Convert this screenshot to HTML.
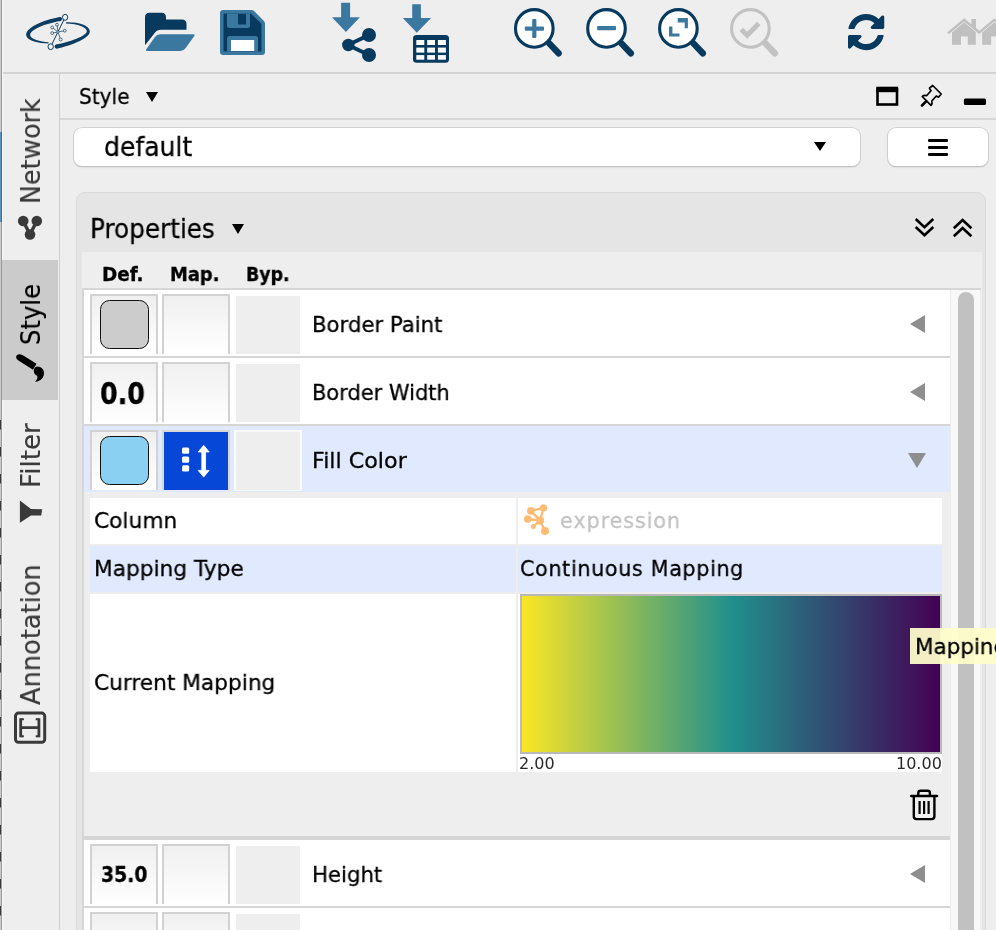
<!DOCTYPE html>
<html lang="en">
<head>
<meta charset="utf-8">
<title>Style</title>
<style>
*{box-sizing:border-box;margin:0;padding:0}
html,body{width:996px;height:930px;overflow:hidden;background:#eeeeee}
body{font-family:"DejaVu Sans","Liberation Sans",sans-serif;color:#000;position:relative}
#app{position:absolute;left:0;top:0;width:996px;height:930px;overflow:hidden;background:#eeeeee}
.a{position:absolute}
.t{position:absolute;white-space:nowrap;line-height:1;transform-origin:0 0;-webkit-text-stroke:.3px currentColor;will-change:transform}
.b{font-family:"DejaVu Sans Condensed","DejaVu Sans","Liberation Sans",sans-serif;font-weight:bold}
.row{position:absolute;left:84px;width:866px;height:66px;background:#fff}
.sep{position:absolute;left:84px;width:866px;height:2px;background:#d6d6d6}
.cell{position:absolute;top:4px;height:60px;width:68px;border:2px solid #d2d2d2;border-bottom:none;background:linear-gradient(#f0f0f0,#ffffff)}
.byp{position:absolute;top:6px;left:152px;width:64px;height:58px;background:#eeeeee}
.sw{position:absolute;left:8px;top:3.800px;width:49.300px;height:49.300px;border:1.400px solid #111;border-radius:9.500px}
.tri{position:absolute;width:0;height:0}
.vt{position:absolute;white-space:nowrap;line-height:1;transform-origin:0 0;will-change:transform;-webkit-text-stroke:.2px currentColor;transform:rotate(-90deg) scaleX(.94);font-size:26px;color:#3a3a3a}
svg{position:absolute;overflow:visible}
</style>
</head>
<body>
<div id="app">

<!-- left strip -->
<div class="a" style="left:0;top:0;width:1px;height:930px;background:#c8c9c9"></div>
<div class="a" style="left:1px;top:0;width:1px;height:930px;background:#9b9b9b"></div>
<div class="a" style="left:0;top:132px;width:1px;height:90px;background:#5a8fc0"></div>
<div class="a" style="left:1px;top:132px;width:1px;height:90px;background:#41709f"></div>
<div class="a" style="left:0;top:420px;width:1.400px;height:510px;background:repeating-linear-gradient(180deg,#3a3a3a 0,#3a3a3a 9px,rgba(0,0,0,0) 10px,rgba(0,0,0,0) 27px)"></div>
<div class="a" style="left:2px;top:0;width:1px;height:930px;background:#f7f7f7"></div>

<!-- toolbar -->
<div id="toolbar" class="a" style="left:3px;top:0;width:993px;height:72px;background:#eeeeee"></div>
<div class="a" style="left:3px;top:72px;width:993px;height:2px;background:#d3d3d3"></div>


<!-- toolbar icons -->
<svg id="tbicons" class="a" style="left:0;top:0" width="996" height="72" viewBox="0 0 996 72">
 <!-- cytoscape logo -->
 <g fill="#0b3c62" stroke="none">
  <path d="M60,17 C42,20 23.5,29 26.5,36.2 C28.3,41 38,43.2 48.5,43.4 L48.5,42.3 C40,41.6 30.8,39.2 30.2,35.2 C29.5,30.2 44,23.8 60.500,21.100 Z"/>
  <circle cx="60" cy="19.100" r="2.100"/>
  <path d="M66,22.2 C78,21.8 89,25 89.8,31 C90.6,38 72,45.3 57,48.6 L56.2,44.6 C70,41.6 86.4,36.2 86.8,31.2 C87,27.2 78,23.8 66,23.4 Z"/>
  <circle cx="56.7" cy="46.6" r="2.1"/>
 </g>
 <g stroke="#0b3c62" stroke-width="1" fill="#f2f2f2">
  <line x1="65" y1="17.5" x2="50.7" y2="46.7"/>
  <g stroke-width=".7">
  <line x1="58" y1="32" x2="52.2" y2="27.5"/><line x1="58" y1="32" x2="57" y2="24.7"/><line x1="58" y1="32" x2="64.8" y2="30.7"/><line x1="58" y1="32" x2="52.2" y2="33.1"/><line x1="58" y1="32" x2="60.6" y2="39.5"/>
  <circle cx="52.2" cy="27.5" r="1.4"/><circle cx="57" cy="24.7" r="1.4"/><circle cx="64.8" cy="30.7" r="1.4"/><circle cx="52.2" cy="33.1" r="1.4"/><circle cx="60.6" cy="39.5" r="1.5"/><circle cx="58" cy="32" r="1.2"/>
  </g>
  <ellipse cx="65.100" cy="17.300" rx="2.600" ry="3"/><ellipse cx="50.700" cy="46.700" rx="2.700" ry="2.900"/>
 </g>
 <!-- folder open -->
 <path fill="#083a5f" d="M145,17.300 q0,-4.500 4.500,-4.500 h12 q4.500,0 4.500,4.500 v2.300 h16 q4.500,0 4.500,4.500 v5.700 h-25.500 q-4,0 -6.300,3.300 L145,45.300 Z"/>
 <path fill="#3b78a0" d="M160.2,34.3 h33.2 q2,0 0.9,1.7 l-8.6,12 q-2,2.9 -5.5,2.9 h-33 q-2,0 -0.9,-1.7 l8.6,-12.2 q1.9,-2.7 5.3,-2.7 Z"/>
 <!-- floppy -->
 <path fill="#3b78a0" d="M223,10 h28.5 q1.5,0 2.6,1.1 l9.800,9.800 q1.100,1.100 1.100,2.600 v28.500 q0,3 -3,3 h-39 q-3,0 -3,-3 v-39 q0,-3 3,-3 Z"/>
 <path fill="#083a5f" d="M223.500,13.500 h27.500 l10.500,10.500 v27.500 h-38 Z"/>
 <path fill="#3b78a0" d="M227,13.500 h23 v11.900 q0,2.500 -2.500,2.500 h-18 q-2.500,0 -2.500,-2.500 Z"/>
 <rect fill="#083a5f" x="238" y="13.900" width="8" height="10.600"/>
 <path fill="#3b78a0" d="M227,51.500 v-13 q0,-2.500 2.500,-2.500 h26 q2.500,0 2.500,2.500 v13 Z"/>
 <rect fill="#fff" x="231" y="40" width="23.200" height="11"/>
 <!-- import network -->
 <path fill="#3b78a0" d="M341.100,2.700 h9 v14.600 h9.800 l-14,14.600 l-13.900,-14.600 h9.100 Z"/>
 <g fill="#083a5f" stroke="#083a5f">
  <path fill="none" stroke-width="4" d="M369,35 L348,45 L369,55"/>
  <circle stroke="none" cx="348.300" cy="45" r="6.200"/><circle stroke="none" cx="369" cy="35" r="7"/><circle stroke="none" cx="369" cy="55" r="7"/>
 </g>
 <!-- import table -->
 <path fill="#3b78a0" d="M412.200,4.200 h8.700 v13.800 h10.200 l-14.300,14.800 l-14,-14.800 h9.400 Z"/>
 <rect fill="#083a5f" x="413" y="34.900" width="36" height="27.800" rx="3.500"/>
 <g fill="#fff">
  <rect x="416.300" y="40" width="8" height="5"/><rect x="427.200" y="40" width="7.800" height="5"/><rect x="437.900" y="40" width="8" height="5"/>
  <rect x="416.300" y="47.600" width="8" height="5"/><rect x="427.200" y="47.600" width="7.800" height="5"/><rect x="437.900" y="47.600" width="8" height="5"/>
  <rect x="416.300" y="55.100" width="8" height="4.600"/><rect x="427.200" y="55.100" width="7.800" height="4.600"/><rect x="437.900" y="55.100" width="8" height="4.600"/>
 </g>
 <!-- zoom in -->
 <g stroke="#083a5f" stroke-linecap="round">
  <line x1="549" y1="43.100" x2="558.600" y2="53.300" stroke-width="6.400"/>
  <circle cx="534.300" cy="28.400" r="18.800" fill="#fff" stroke-width="3.100"/>
  <line x1="621.200" y1="43.100" x2="630.800" y2="53.300" stroke-width="6.400"/>
  <circle cx="606.500" cy="28.400" r="18.800" fill="#fff" stroke-width="3.100"/>
  <line x1="693.200" y1="43.100" x2="702.800" y2="53.300" stroke-width="6.400"/>
  <circle cx="678.400" cy="28.400" r="18.800" fill="#fff" stroke-width="3.100"/>
 </g>
 <g fill="#3b78a0">
  <rect x="524.800" y="26.500" width="19.200" height="4.200" rx="1"/><rect x="532.200" y="19.100" width="4.200" height="18.900" rx="1"/>
  <rect x="597.100" y="26" width="18.900" height="4.200" rx="1"/>
  <path d="M677.700,18 h10.200 v10.200 h-3.200 v-5.800 h-7 Z"/>
  <path d="M669,26.400 h3.400 v7 h7.100 v3.200 h-10.500 Z"/>
 </g>
 <!-- zoom selected (disabled) -->
 <g stroke="#c2c2c2" stroke-linecap="round" fill="none">
  <line x1="765.200" y1="43.100" x2="774.800" y2="53.300" stroke-width="6.400"/>
  <circle cx="750.400" cy="28.400" r="18.800" stroke-width="3.100" fill="#eeeeee"/>
  <path d="M741.200,29.500 L747.200,35.300 L758.800,23.500" stroke-width="4.800" stroke-linecap="butt"/>
 </g>
 <!-- refresh -->
 <g transform="translate(848,13.900) scale(0.0236)">
  <path fill="#083a5f" transform="translate(-128,-128)" d="M1639 1056q0 5-1 7-64 268-268 434.500t-478 166.500q-146 0-282.500-55t-243.500-157l-129 129q-19 19-45 19t-45-19-19-45v-448q0-26 19-45t45-19h448q26 0 45 19t19 45-19 45l-137 137q71 66 161 102t187 36q134 0 250-65t186-179q11-17 53-117 8-23 30-23h192q13 0 22.500 9.500t9.500 22.500zm25-800v448q0 26-19 45t-45 19h-448q-26 0-45-19t-19-45 19-45l138-138q-148-137-349-137-134 0-250 65t-186 179q-11 17-53 117-8 23-30 23h-199q-13 0-22.500-9.500t-9.500-22.500v-7q65-268 270-434.500t480-166.500q146 0 284 55.500t245 156.500l130-129q19-19 45-19t45 19 19 45z"/>
 </g>
 <!-- homes (disabled) -->
 <g fill="#c0c0c0" stroke="none">
  <path d="M952,32.500 L964.200,22.300 L975.800,32 V44.700 H967.800 V36.500 H961 V44.700 H952 Z"/>
  <path d="M947.300,32.300 L964.200,18.300 L971.400,24.300 V19 H976 V28.100 L979.500,31 L978,32.900 L964.200,21.400 L948.800,34.200 Z"/>
  <path d="M982.200,32.500 L994.400,22.300 L1006,32 V44.700 H998 V36.500 H991.200 V44.700 H982.200 Z"/>
  <path d="M977.500,32.300 L994.400,18.300 L1001.600,24.300 V19 H1006 V28.100 L1009.700,31 L1008.200,32.900 L994.400,21.400 L979,34.200 Z"/>
 </g>
</svg>

<!-- sidebar -->
<div id="sidebar" class="a" style="left:3px;top:74px;width:56px;height:856px;background:#eeeeee"></div>
<div class="a" style="left:59px;top:74px;width:1px;height:856px;background:#d0d0d0"></div>
<div class="a" style="left:2px;top:260px;width:56px;height:139.700px;background:#cbcbcb"></div>

<!-- title bar -->
<div class="a" style="left:60px;top:118px;width:936px;height:2px;background:#d6d6d6"></div>


<!-- sidebar contents -->
<div class="vt" style="left:18px;top:203.500px;transform:rotate(-90deg) scaleX(.973)">Network</div>
<div class="vt" style="left:18px;top:344.500px;color:#000;transform:rotate(-90deg) scaleX(.935)">Style</div>
<div class="vt" style="left:18px;top:487.500px;transform:rotate(-90deg) scaleX(1.005)">Filter</div>
<div class="vt" style="left:18px;top:704.500px;transform:rotate(-90deg) scaleX(.987)">Annotation</div>
<svg class="a" style="left:0;top:74px" width="60" height="856" viewBox="0 74 60 856">
 <!-- share (network) icon -->
 <g fill="#3a3a3a" stroke="#3a3a3a">
  <path fill="none" stroke-width="3.400" d="M23.200,221 L30,234.500 L36.800,221"/>
  <circle stroke="none" cx="23.200" cy="221" r="5.300"/><circle stroke="none" cx="36.800" cy="221" r="5.300"/><circle stroke="none" cx="30" cy="234.500" r="5.300"/>
 </g>
 <!-- brush icon -->
 <g fill="#000">
  <path d="M16.200,356.500 C16.800,354 19.500,353.600 22,354.800 L36.500,363.800 L33,369.800 L18.800,360.800 C16.800,359.600 15.800,358.200 16.200,356.500 Z"/>
  <path d="M33.800,370.500 C34,366.500 37.500,365.800 40.500,367.200 C44,368.900 45,373.500 43,377.200 C41.500,380 38.500,381.600 35,381.800 C37.500,379.500 38,377.500 37,375.800 C35.500,374.800 33.700,373.500 33.800,370.500 Z"/>
 </g>
 <!-- filter icon -->
 <path fill="#3a3a3a" d="M19.900,500.600 L31,509 L42.200,509.300 L41.200,515.600 L31,515.600 L19.900,522.800 Z"/>
 <!-- annotation icon -->
 <g fill="none" stroke="#3a3a3a">
  <rect x="15.500" y="713.100" width="29.200" height="29.200" rx="3" stroke-width="3"/>
  <path stroke-width="2.800" d="M20.700,718.300 v18.900 M38.900,718.300 v18.900 M20.700,727.700 h18.200"/>
  <path stroke-width="2" d="M20.700,719.300 h3.200 M20.700,736.200 h3.200 M35.700,719.300 h3.200 M35.700,736.200 h3.200"/>
 </g>
</svg>

<!-- title bar contents -->
<div class="t" id="t_style" style="left:79.300px;top:85.500px;font-size:22px;transform:scaleX(.915)">Style</div>
<div class="tri" style="left:146.300px;top:92px;border-left:6px solid transparent;border-right:6px solid transparent;border-top:10px solid #000"></div>
<svg class="a" style="left:870px;top:80px" width="126" height="36" viewBox="870 80 126 36">
 <rect x="877.500" y="89.500" width="19.500" height="15" fill="none" stroke="#000" stroke-width="2.600"/>
 <rect x="876.300" y="86.700" width="21.800" height="5.500" fill="#000"/>
 <!-- pin -->
 <g fill="none" stroke="#000" stroke-width="1.700" stroke-linejoin="round">
  <path d="M929.500,88.200 L932.700,85.500 L941.200,94 L938.500,97.200 L936.300,96 L931.800,101 C932.500,103 932,104.300 931,105.300 L922.200,96.500 C923.200,95.500 924.500,95 926.500,95.700 L931,90.700 Z" fill="#eeeeee"/>
  <path d="M926.300,101.200 L922,105.500" stroke-width="2.600" stroke-linecap="round"/>
 </g>
 <rect x="963.900" y="98.400" width="22.100" height="6.600" rx="1.500" fill="#000"/>
</svg>

<!-- style selector -->
<div class="a" style="left:73.500px;top:127.600px;width:786.400px;height:38.400px;background:#fff;border-radius:8px;box-shadow:0 0 0 .8px #cacaca, 0 1px 1.500px rgba(0,0,0,.3)"></div>
<div class="t" id="t_default" style="left:104.200px;top:134px;font-size:26px;transform:scaleX(.965)">default</div>
<div class="tri" style="left:814px;top:142px;border-left:6px solid transparent;border-right:6px solid transparent;border-top:9.500px solid #000"></div>
<div class="a" style="left:887.500px;top:127.600px;width:100px;height:38.400px;background:#fff;border-radius:8px;box-shadow:0 0 0 .8px #cacaca, 0 1px 1.500px rgba(0,0,0,.3)"></div>
<div class="a" style="left:928px;top:138.500px;width:20px;height:3.400px;background:#000;border-radius:1px;box-shadow:0 7px 0 #000,0 14px 0 #000"></div>


<!-- properties panel -->
<div class="a" style="left:75.500px;top:191.800px;width:910px;height:760px;background:#e5e5e5;border:1px solid #dadada;border-radius:9px"></div>
<div class="t" id="t_props" style="left:90px;top:216.400px;font-size:26px;transform:scaleX(.95)">Properties</div>
<div class="tri" style="left:232px;top:224px;border-left:6px solid transparent;border-right:6px solid transparent;border-top:10px solid #000"></div>
<svg class="a" style="left:910px;top:214px" width="70" height="28" viewBox="910 214 70 28">
 <g fill="none" stroke="#000" stroke-width="2.600">
  <path d="M915.700,219 L924.500,227.300 L933.300,219 M915.700,227 L924.500,235.300 L933.300,227"/>
  <path d="M953.800,228.300 L962.600,220 L971.400,228.300 M953.800,236.300 L962.600,228 L971.400,236.300"/>
 </g>
</svg>
<div class="a" style="left:82px;top:252px;width:900px;height:700px;background:#eeeeee"></div>
<div class="t b" style="left:102px;top:264.300px;font-size:20px;transform:scaleX(1.02)">Def.</div>
<div class="t b" style="left:170.300px;top:264.300px;font-size:20px;transform:scaleX(.993)">Map.</div>
<div class="t b" style="left:246.200px;top:264.300px;font-size:20px;transform:scaleX(.965)">Byp.</div>
<!-- scroll pane -->
<div class="a" style="left:82px;top:288px;width:899px;height:2px;background:#d6d6d6"></div>
<div class="a" style="left:82px;top:288px;width:2px;height:650px;background:#d6d6d6"></div>
<div class="a" style="left:950px;top:290px;width:31px;height:650px;background:#f8f8f8;border-left:1px solid #ececec;border-right:1px solid #ececec"></div>
<div class="a" style="left:958px;top:292px;width:16px;height:660px;background:#c1c1c1;border-radius:8px"></div>
<div class="row" style="top:290px;background:#fff"><div class="cell" style="left:6px"><div class="sw" style="background:#cccccc"></div></div><div class="cell" style="left:78px"></div><div class="byp"></div><div class="t lbl" style="left:228px;top:23.500px;font-size:22px;transform:scaleX(.965)">Border Paint</div><div class="tri" style="left:826px;top:25px;border-top:9px solid transparent;border-bottom:9px solid transparent;border-right:15px solid #8e8e8e"></div></div>
<div class="sep" style="top:356px"></div>
<div class="row" style="top:358px;background:#fff"><div class="cell" style="left:6px"><div class="t b" style="left:8px;top:14.900px;font-size:30px;transform:scaleX(.94)">0.0</div></div><div class="cell" style="left:78px"></div><div class="byp"></div><div class="t lbl" style="left:228px;top:23.500px;font-size:22px;transform:scaleX(.952)">Border Width</div><div class="tri" style="left:826px;top:25px;border-top:9px solid transparent;border-bottom:9px solid transparent;border-right:15px solid #8e8e8e"></div></div>
<div class="sep" style="top:424px"></div>
<div class="row" style="top:426px;background:#e0e9fd"><div class="cell" style="left:6px"><div class="sw" style="background:#89d0f2"></div></div><div class="cell" style="left:78px;background:#0647d8;border-color:#d7d7d7"></div><div class="byp" style="top:4px;left:150px;width:68px;height:61px;border:2px solid #fafafa;border-bottom:1px solid #f2f6fe"></div><div class="t lbl" style="left:228px;top:23.500px;font-size:22px;transform:scaleX(1.01)">Fill Color</div><div class="tri" style="left:824px;top:27px;border-left:9.500px solid transparent;border-right:9.500px solid transparent;border-top:15px solid #8e8e8e"></div></div>

<!-- mapping icon -->
<svg class="a" style="left:164px;top:432px" width="64" height="58" viewBox="164 432 64 58">
 <g fill="#fff">
  <rect x="182" y="447.500" width="7.200" height="6.300" rx="1.500"/><rect x="182" y="456.400" width="7.200" height="6.400" rx="1.500"/><rect x="182" y="465.200" width="7.200" height="6.400" rx="1.500"/>
  <path d="M203.700,445.300 L209.200,452 H205.600 V470.400 H209.200 L203.700,477.100 L198.200,470.400 H201.800 V452 H198.200 Z" stroke="#fff" stroke-width=".8" stroke-linejoin="round"/>
 </g>
</svg>
<!-- mapping editor -->
<div class="a" style="left:90px;top:498px;width:852px;height:46px;background:#fff"></div>
<div class="a" style="left:90px;top:546px;width:852px;height:46px;background:#e0e9fd"></div>
<div class="a" style="left:90px;top:594px;width:852px;height:178px;background:#fff"></div>
<div class="a" style="left:516px;top:498px;width:2px;height:274px;background:#eeeeee"></div>
<div class="t" style="left:94.400px;top:509.600px;font-size:22px;transform:scaleX(.988)">Column</div>
<div class="t" style="left:93.900px;top:558px;font-size:22px;transform:scaleX(.985)">Mapping Type</div>
<div class="t" style="left:93.900px;top:672px;font-size:22px;transform:scaleX(.985)">Current Mapping</div>
<div class="t" style="left:559.700px;top:509.900px;font-size:22px;color:#c2c2c2;letter-spacing:1px;transform:scaleX(.94)">expression</div>
<div class="t" style="left:519.600px;top:558.200px;font-size:22px;letter-spacing:.7px;transform:scaleX(.94)">Continuous Mapping</div>
<svg class="a" style="left:520px;top:500px" width="34" height="40" viewBox="520 500 34 40">
 <g fill="#fdbb73" stroke="#fdbb73" stroke-width="2.300">
  <path fill="none" d="M543.500,507.900 L530.900,510.900 L540.100,520.600 Z M527.700,519 L540.100,520.600 L533.400,526.500 M540.100,520.600 L545,531"/>
  <circle stroke="none" cx="543.500" cy="507.900" r="3.600"/><circle stroke="none" cx="530.900" cy="510.900" r="3.800"/><circle stroke="none" cx="527.700" cy="519" r="3.800"/><circle stroke="none" cx="540.100" cy="520.600" r="4"/><circle stroke="none" cx="533.400" cy="526.500" r="2.500"/><circle stroke="none" cx="545" cy="531" r="4"/>
 </g>
</svg>
<div class="a" style="left:520px;top:594px;width:422px;height:160px;border:2px solid #b9b9b9;background:linear-gradient(90deg,#fbe625 0%,#21908c 50%,#440154 100%)"></div>
<div class="t" style="left:519.400px;top:755.900px;font-size:16px;color:#2a2a2a;-webkit-text-stroke:0;filter:blur(.35px)">2.00</div>
<div class="t" style="left:896.400px;top:755.900px;font-size:16px;color:#2a2a2a;-webkit-text-stroke:0;filter:blur(.35px)">10.00</div>
<!-- trash -->
<svg class="a" style="left:906px;top:786px" width="36" height="38" viewBox="906 786 36 38">
 <g fill="none" stroke="#000" stroke-width="2.400" stroke-linecap="round" stroke-linejoin="round">
  <path d="M911.200,796 H937"/>
  <path d="M918.300,795.500 V793 Q918.300,790.800 920.500,790.800 H927.700 Q929.900,790.800 929.900,793 V795.500"/>
  <path d="M913.800,796.500 V816.200 Q913.800,819.100 916.700,819.100 H931.500 Q934.400,819.100 934.400,816.200 V796.500"/>
  <path d="M919.600,801 V814 M924.100,801 V814 M928.600,801 V814" stroke-width="2.200" stroke-linecap="butt"/>
 </g>
</svg>
<div class="a" style="left:84px;top:836px;width:866px;height:4px;background:#d6d6d6"></div>
<div class="row" style="top:840px;background:#fff"><div class="cell" style="left:6px"><div class="t b" style="left:8.700px;top:17.800px;font-size:22px;transform:scaleX(.952)">35.0</div></div><div class="cell" style="left:78px"></div><div class="byp"></div><div class="t lbl" style="left:228px;top:23.500px;font-size:22px;transform:scaleX(.965)">Height</div><div class="tri" style="left:826px;top:25px;border-top:9px solid transparent;border-bottom:9px solid transparent;border-right:15px solid #8e8e8e"></div></div>
<div class="sep" style="top:906px"></div>
<div class="row" style="top:908px;background:#fff"><div class="cell" style="left:6px"></div><div class="cell" style="left:78px"></div><div class="byp"></div><div class="t lbl" style="left:228px;top:23.500px;font-size:22px;transform:scaleX(.965)"></div><div class="tri" style="left:826px;top:25px;border-top:9px solid transparent;border-bottom:9px solid transparent;border-right:15px solid #8e8e8e"></div></div>

<!-- tooltip -->
<div class="a" style="left:910px;top:628px;width:100px;height:36px;background:rgba(254,253,203,.94)"></div>
<div class="t" style="left:915.400px;top:635.700px;font-size:22px;transform:scaleX(.975)">Mapping</div>

</div>
</body>
</html>
